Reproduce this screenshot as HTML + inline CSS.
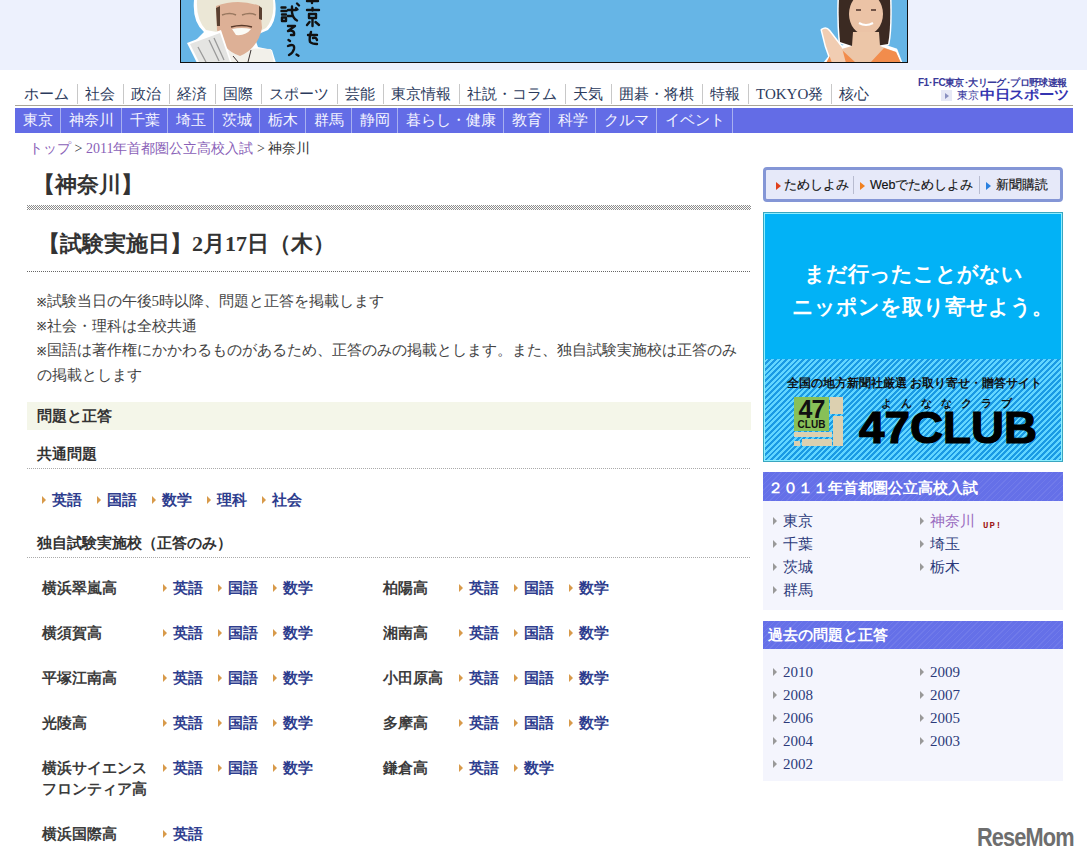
<!DOCTYPE html>
<html><head><meta charset="utf-8">
<style>
*{margin:0;padding:0;box-sizing:border-box}
html,body{width:1087px;height:861px;overflow:hidden;background:#fff}
body{position:relative;font-family:"Liberation Serif",serif;color:#333;font-size:15px;text-spacing-trim:space-all}
.abs{position:absolute}
#topbg{left:0;top:0;width:1087px;height:70px;background:#edf1fd}
#banner{left:180px;top:-28px;width:728px;height:91px;border:1.5px solid #111;background:#66b5e6;overflow:hidden}
/* top nav */
#gnav{left:16.5px;top:84px;height:20px;display:flex;white-space:nowrap}
#gnav span{display:block;height:20px;line-height:20px;padding:0 7.5px;border-left:1px solid #c8c8c8;color:#2b3a5c;font-size:15px}
#gnav span:first-child{border-left:none}
#gline{left:15px;top:105px;width:1058px;height:1px;background:#a8a498}
#lnav{left:15px;top:108px;width:1058px;height:25px;background:#636ce6;display:flex;white-space:nowrap}
#lnav span{display:block;height:25px;line-height:25px;padding:0 7.5px;border-right:1px solid #a8b0f0;color:#f4f4ff;font-size:15px}
#bc{left:29px;top:139px;font-size:14px;line-height:20px;color:#8a5fb8;white-space:nowrap}
#bc .g{color:#333}
h1{position:absolute;left:32.5px;top:173px;font-size:22px;line-height:24px;font-weight:bold;color:#333;white-space:nowrap}
#hatch{left:27px;top:205px;width:724px;height:5px;background:repeating-conic-gradient(#8c8c8c 0 25%,#fff 0 50%) 1px 0/2px 2px}
h2{position:absolute;left:38px;top:231.5px;font-size:22px;line-height:24px;font-weight:bold;color:#333;white-space:nowrap}
#dl1{left:27px;top:271px;width:724px;height:1px;background:repeating-linear-gradient(90deg,#666 0 1px,transparent 1px 2px)}
#notes{left:37px;top:290px;font-size:15px;line-height:23.5px;color:#444;white-space:nowrap}
.km{display:inline-block;width:9.5px;font-size:11px;position:relative;top:-0.5px;left:-0.5px;font-weight:bold}
#sec{left:27px;top:402px;width:724px;height:28px;background:#f4f6e9}
#sec span{position:absolute;left:10px;top:4px;font-size:15px;line-height:20px;font-weight:bold;color:#333}
.sub{position:absolute;left:37px;font-size:15px;line-height:20px;font-weight:bold;color:#333;white-space:nowrap}
.dots{position:absolute;left:27px;width:724px;height:1px;background:repeating-linear-gradient(90deg,#aaa 0 1px,transparent 1px 2px)}
.lk{position:absolute;font-size:15px;line-height:20px;font-weight:bold;color:#2e3d8e;white-space:nowrap}
.ar{position:absolute;width:0;height:0;border-left:4px solid #d89a4a;border-top:4px solid transparent;border-bottom:4px solid transparent}
.sn{position:absolute;font-size:15px;line-height:21px;font-weight:bold;color:#3c3c3c;white-space:nowrap}
/* right column */
#tame{left:763px;top:167px;width:300px;height:35px;border:3px solid #8496d6;border-radius:4px;background:#e6e9f9;font-family:"Liberation Sans",sans-serif;font-size:12.5px;color:#111;font-weight:normal;-webkit-text-stroke:0.15px #111}
#tame .t{position:absolute;top:8px;line-height:15px;white-space:nowrap}
#tame .sp{position:absolute;top:6px;width:1px;height:18px;background:#b8bcd0}
.tri{position:absolute;width:0;height:0;border-left:5.5px solid #e0401c;border-top:4px solid transparent;border-bottom:4px solid transparent}
#ad{left:763px;top:212px;width:300px;height:250px;border:1px solid #3aa6c0;background:#02b2f6;overflow:hidden;font-family:"Liberation Sans",sans-serif}
#ad .in{position:absolute;left:0;top:0;right:0;bottom:0;border:1px solid #8eeeff}
#ad .st{position:absolute;left:1px;top:146px;width:296px;height:101px;background:repeating-linear-gradient(-45deg,#1a9ae4 0 2px,#62d6ff 2px 4px)}
#ad .l1,#ad .l2{position:absolute;left:0;width:298px;text-align:center;color:#fff;font-weight:bold;font-size:21px;line-height:26px;white-space:nowrap}
.box{position:absolute;left:763px;width:300px;background:#f4f5fd}
.bh{position:absolute;left:0;top:0;width:300px;background:#6570e8 repeating-linear-gradient(-45deg,rgba(255,255,255,0) 0 3px,rgba(255,255,255,.07) 3px 4px);color:#fff;font-weight:bold;font-size:15px;white-space:nowrap}
.it{position:absolute;font-size:15px;line-height:20px;color:#2b3a7a;white-space:nowrap}
.ga{position:absolute;width:0;height:0;border-left:4px solid #999;border-top:4px solid transparent;border-bottom:4px solid transparent}
</style></head><body>
<div id="topbg" class="abs"></div>
<div id="banner" class="abs"></div>
<svg class="abs" style="left:0;top:0" width="1087" height="62" viewBox="0 0 1087 62">
<g>
<!-- man -->
<path d="M194 0 L275 0 Q278 20 268 30 L254 36 L258 47 L272 50 L276 63 L200 63 L196 40 L204 32 Q192 22 194 0 Z" fill="#fff"/>
<path d="M197 0 L273 0 Q275 18 266 28 L256 33 L222 33 L206 30 Q196 20 197 0 Z" fill="#ebe7d6"/>
<path d="M229 48 L271 49 L274 63 L226 63 Z" fill="#f2f0ea"/>
<path d="M216 6 Q238 -2 260 6 L262 28 Q258 48 240 56 Q222 50 217 30 Z" fill="#ddb096"/>
<path d="M216 8 L220 6 L220 26 L217 26 Z M259 6 L262 8 L262 20 L259 19 Z" fill="#5a4030"/>
<path d="M222 15 Q230 12 236 15 M242 15 Q250 12 256 15" stroke="#9a7860" stroke-width="1.5" fill="none"/>
<path d="M232 29 Q242 27 251 29 Q246 36 236 35 Z" fill="#fbfbf6"/>
<path d="M231 27 Q242 24 252 27" stroke="#5a3a2a" stroke-width="1.5" fill="none"/>
<path d="M233 56 L238 62 M251 50 L248 62" stroke="#3a3030" stroke-width="1"/>
<path d="M187 43 L221 30 L232 63 L197 63 Z" fill="#fff"/>
<path d="M190 44 L220 33 L230 62 L199 62 Z" fill="#e4e4e2"/>
<path d="M214 38 L224 60 M209 40 L219 61 M198 47 L206 62" stroke="#9a9a9a" stroke-width="1.3"/>
<!-- calligraphy -->
<g stroke="#111" stroke-width="2.4" fill="none" stroke-linecap="round" stroke-linejoin="round">
<path d="M297 3.5 l2 2"/>
<path d="M281.5 7.5 h4 M281.5 11 h5 M282 14.5 h4 M282 17.5 h4 v3.5 h-4 z M288 10 h8 M292 6.5 v6 q1 6 5 8 M296 8 l1.5 1.5 M288 16 h4"/>
<path d="M288 26 h7 l-7 5 q7 -1.5 6 4 h-3"/>
<path d="M288.5 40 l1.5 1 M288 46 q7 -3 6 3 q-1 4 -5 6"/>
<path d="M296.5 54.5 l2 1.2"/>
<path d="M307 1 h11 M312 0 v3"/>
<path d="M307 10 h12 M312.5 8 v2.5 M309 14 h7 v4 h-7 z M312.5 18 v8 M309.5 22 l-2.5 3 M315.5 22 l3.5 3"/>
<path d="M308 35 h9 M311 32 q-2 6 -1 10 q2 2 7 2 M313 38 q3 -1 4 2"/>
</g>
<!-- woman -->
<g stroke="#fff" stroke-width="3" stroke-linejoin="round">
<path d="M839 -2 L890 -2 Q891 30 888 44 L876 46 L852 46 L840 42 Q838 20 839 -2 Z" fill="#fff"/>
<path d="M836 49 L852 44 L878 44 L896 50 L901 63 L825 63 Z" fill="#fff"/>
<path d="M822 30 Q826 27 829 31 L842 48 L846 63 L832 63 L826 46 Z" fill="#fff"/>
</g>
<path d="M839 -2 L890 -2 Q891 30 888 44 L876 46 L852 46 L840 42 Q838 20 839 -2 Z" fill="#3b2a22"/>
<ellipse cx="866" cy="14" rx="17" ry="21" fill="#ebc3a6"/>
<path d="M859 23 Q866 27 873 23" stroke="#fff" stroke-width="2.2" fill="none"/>
<path d="M856 10 h5 M871 10 h5" stroke="#4a3028" stroke-width="1.4"/>
<path d="M853 32 L879 32 L880 46 L896 52 L901 63 L826 63 L838 50 L852 46 Z" fill="#ecc6a8"/>
<path d="M826 63 L832 52 L842 50 L856 63 Z M870 63 L884 48 L896 52 L901 63 Z" fill="#f28c4c"/>
<path d="M822 30 Q826 27 829 31 L842 48 L846 63 L832 63 L826 46 Z" fill="#f1cdb2"/>
</g>
</svg>

<div id="gnav" class="abs"><span>ホーム</span><span>社会</span><span>政治</span><span>経済</span><span>国際</span><span>スポーツ</span><span>芸能</span><span>東京情報</span><span>社説・コラム</span><span>天気</span><span>囲碁・将棋</span><span>特報</span><span>TOKYO発</span><span>核心</span></div>
<div class="abs" style="left:918px;top:76.5px;font-family:'Liberation Sans',sans-serif;font-size:10px;line-height:12px;letter-spacing:-0.6px;font-weight:bold;color:#3a3a9a;white-space:nowrap">F1･FC東京･大リーグ･プロ野球速報</div>
<div class="abs" style="left:941px;top:90px;width:11px;height:11px;background:#e6e8f6"></div>
<div class="abs" style="left:945px;top:93px;width:0;height:0;border-left:4px solid #8a90c0;border-top:3px solid transparent;border-bottom:3px solid transparent"></div>
<div class="abs" style="left:957px;top:88.5px;font-family:'Liberation Sans',sans-serif;font-size:11px;line-height:13px;color:#3a3aa0;white-space:nowrap">東京</div>
<div class="abs" style="left:980px;top:88px;font-family:'Liberation Sans',sans-serif;font-size:12.5px;line-height:14px;font-weight:bold;letter-spacing:-0.5px;color:#3434b0;white-space:nowrap;transform:scaleX(1.18);transform-origin:left top">中日スポーツ</div>
<div id="gline" class="abs"></div>
<div id="lnav" class="abs"><span>東京</span><span>神奈川</span><span>千葉</span><span>埼玉</span><span>茨城</span><span>栃木</span><span>群馬</span><span>静岡</span><span>暮らし・健康</span><span>教育</span><span>科学</span><span>クルマ</span><span>イベント</span></div>

<div id="bc" class="abs">トップ <span class="g">&gt;</span> 2011年首都圏公立高校入試 <span class="g">&gt;</span> <span class="g">神奈川</span></div>
<h1>【神奈川】</h1>
<div id="hatch" class="abs"></div>
<h2>【試験実施日】2月17日（木）</h2>
<div id="dl1" class="abs"></div>
<div id="notes" class="abs"><span class="km">※</span>試験当日の午後5時以降、問題と正答を掲載します<br><span class="km">※</span>社会・理科は全校共通<br><span class="km">※</span>国語は著作権にかかわるものがあるため、正答のみの掲載とします。また、独自試験実施校は正答のみ<br>の掲載とします</div>
<div id="sec" class="abs"><span>問題と正答</span></div>
<div class="sub" style="top:444px">共通問題</div>
<div class="dots" style="top:468px"></div>
<i class="ar" style="left:42px;top:496px"></i><a class="lk" style="left:52px;top:490px">英語</a>
<i class="ar" style="left:97px;top:496px"></i><a class="lk" style="left:107px;top:490px">国語</a>
<i class="ar" style="left:152px;top:496px"></i><a class="lk" style="left:162px;top:490px">数学</a>
<i class="ar" style="left:207px;top:496px"></i><a class="lk" style="left:217px;top:490px">理科</a>
<i class="ar" style="left:262px;top:496px"></i><a class="lk" style="left:272px;top:490px">社会</a>
<div class="sub" style="top:533px">独自試験実施校（正答のみ）</div>
<div class="dots" style="top:557px"></div>
<div class="sn" style="left:42px;top:577.5px">横浜翠嵐高</div>
<i class="ar" style="left:163px;top:584px"></i><a class="lk" style="left:173px;top:578px">英語</a>
<i class="ar" style="left:218px;top:584px"></i><a class="lk" style="left:228px;top:578px">国語</a>
<i class="ar" style="left:273px;top:584px"></i><a class="lk" style="left:283px;top:578px">数学</a>
<div class="sn" style="left:42px;top:622.5px">横須賀高</div>
<i class="ar" style="left:163px;top:629px"></i><a class="lk" style="left:173px;top:623px">英語</a>
<i class="ar" style="left:218px;top:629px"></i><a class="lk" style="left:228px;top:623px">国語</a>
<i class="ar" style="left:273px;top:629px"></i><a class="lk" style="left:283px;top:623px">数学</a>
<div class="sn" style="left:42px;top:667.5px">平塚江南高</div>
<i class="ar" style="left:163px;top:674px"></i><a class="lk" style="left:173px;top:668px">英語</a>
<i class="ar" style="left:218px;top:674px"></i><a class="lk" style="left:228px;top:668px">国語</a>
<i class="ar" style="left:273px;top:674px"></i><a class="lk" style="left:283px;top:668px">数学</a>
<div class="sn" style="left:42px;top:712.5px">光陵高</div>
<i class="ar" style="left:163px;top:719px"></i><a class="lk" style="left:173px;top:713px">英語</a>
<i class="ar" style="left:218px;top:719px"></i><a class="lk" style="left:228px;top:713px">国語</a>
<i class="ar" style="left:273px;top:719px"></i><a class="lk" style="left:283px;top:713px">数学</a>
<div class="sn" style="left:42px;top:757.5px">横浜サイエンス<br>フロンティア高</div>
<i class="ar" style="left:163px;top:764px"></i><a class="lk" style="left:173px;top:758px">英語</a>
<i class="ar" style="left:218px;top:764px"></i><a class="lk" style="left:228px;top:758px">国語</a>
<i class="ar" style="left:273px;top:764px"></i><a class="lk" style="left:283px;top:758px">数学</a>
<div class="sn" style="left:42px;top:823.5px">横浜国際高</div>
<i class="ar" style="left:163px;top:830px"></i><a class="lk" style="left:173px;top:824px">英語</a>
<div class="sn" style="left:383px;top:577.5px">柏陽高</div>
<i class="ar" style="left:459px;top:584px"></i><a class="lk" style="left:469px;top:578px">英語</a>
<i class="ar" style="left:514px;top:584px"></i><a class="lk" style="left:524px;top:578px">国語</a>
<i class="ar" style="left:569px;top:584px"></i><a class="lk" style="left:579px;top:578px">数学</a>
<div class="sn" style="left:383px;top:622.5px">湘南高</div>
<i class="ar" style="left:459px;top:629px"></i><a class="lk" style="left:469px;top:623px">英語</a>
<i class="ar" style="left:514px;top:629px"></i><a class="lk" style="left:524px;top:623px">国語</a>
<i class="ar" style="left:569px;top:629px"></i><a class="lk" style="left:579px;top:623px">数学</a>
<div class="sn" style="left:383px;top:667.5px">小田原高</div>
<i class="ar" style="left:459px;top:674px"></i><a class="lk" style="left:469px;top:668px">英語</a>
<i class="ar" style="left:514px;top:674px"></i><a class="lk" style="left:524px;top:668px">国語</a>
<i class="ar" style="left:569px;top:674px"></i><a class="lk" style="left:579px;top:668px">数学</a>
<div class="sn" style="left:383px;top:712.5px">多摩高</div>
<i class="ar" style="left:459px;top:719px"></i><a class="lk" style="left:469px;top:713px">英語</a>
<i class="ar" style="left:514px;top:719px"></i><a class="lk" style="left:524px;top:713px">国語</a>
<i class="ar" style="left:569px;top:719px"></i><a class="lk" style="left:579px;top:713px">数学</a>
<div class="sn" style="left:383px;top:757.5px">鎌倉高</div>
<i class="ar" style="left:459px;top:764px"></i><a class="lk" style="left:469px;top:758px">英語</a>
<i class="ar" style="left:514px;top:764px"></i><a class="lk" style="left:524px;top:758px">数学</a>

<div id="tame" class="abs">
<i class="tri" style="left:10px;top:11.5px"></i><span class="t" style="left:18px">ためしよみ</span>
<i class="sp" style="left:87px"></i>
<i class="tri" style="left:94px;top:11.5px;border-left-color:#f08020"></i><span class="t" style="left:104px">Webでためしよみ</span>
<i class="sp" style="left:213px"></i>
<i class="tri" style="left:220px;top:11.5px;border-left-color:#2a80e0"></i><span class="t" style="left:230px">新聞購読</span>
</div>
<div id="ad" class="abs"><div class="in"></div>
<div class="l1" style="top:48px">まだ行ったことがない</div>
<div class="l2" style="top:81px;padding-left:18px">ニッポンを取り寄せよう。</div>
<div class="st"></div>
<div style="position:absolute;left:23px;top:163px;font-size:11.5px;line-height:14px;font-weight:bold;color:#111;white-space:nowrap">全国の地方新聞社厳選 お取り寄せ・贈答サイト</div>
<div style="position:absolute;left:66px;top:184px;width:13px;height:17px;background:#dcd0b0"></div>
<div style="position:absolute;left:69px;top:203px;width:10px;height:30px;background:#dcd0b0"></div>
<div style="position:absolute;left:30px;top:219px;width:38px;height:5px;background:#dcd0b0"></div>
<div style="position:absolute;left:38px;top:226px;width:30px;height:7px;background:#dcd0b0"></div>
<div style="position:absolute;left:30px;top:228px;width:6px;height:5px;background:#dcd0b0"></div>
<div style="position:absolute;left:30px;top:184px;width:35px;height:34px;background:#88c058"></div>
<div style="position:absolute;left:29px;top:183px;width:37px;text-align:center;font-size:25px;line-height:26px;font-weight:bold;color:#111;letter-spacing:-1px">47</div>
<div style="position:absolute;left:29px;top:206px;width:37px;text-align:center;font-size:10px;line-height:12px;font-weight:bold;color:#111">CLUB</div>
<div style="position:absolute;left:117px;top:183px;font-size:11px;line-height:14px;font-weight:bold;color:#111;letter-spacing:9px;white-space:nowrap">よんななクラブ</div>
<div style="position:absolute;left:95px;top:189px;font-size:44px;line-height:52px;font-weight:bold;color:#000;-webkit-text-stroke:1.2px #000;white-space:nowrap;transform:scaleX(1.04);transform-origin:left top">47CLUB</div>
</div>
<div class="box" style="top:472px;height:138px">
<div class="bh" style="height:29px;line-height:29px;padding-left:5px;padding-top:2px;letter-spacing:0">２０１１年首都圏公立高校入試</div>
<i class="ga" style="left:10px;top:44.5px"></i><span class="it" style="left:20px;top:38.5px">東京</span>
<i class="ga" style="left:10px;top:67.5px"></i><span class="it" style="left:20px;top:61.5px">千葉</span>
<i class="ga" style="left:10px;top:90.5px"></i><span class="it" style="left:20px;top:84.5px">茨城</span>
<i class="ga" style="left:10px;top:113.5px"></i><span class="it" style="left:20px;top:107.5px">群馬</span>
<i class="ga" style="left:157px;top:44.5px"></i><span class="it" style="left:167px;top:38.5px;color:#9a6cc0">神奈川</span><span style="position:absolute;left:220px;top:49px;font-family:'Liberation Mono',monospace;font-size:9px;line-height:10px;letter-spacing:1px;font-weight:bold;color:#a01818">UP!</span>
<i class="ga" style="left:157px;top:67.5px"></i><span class="it" style="left:167px;top:61.5px">埼玉</span>
<i class="ga" style="left:157px;top:90.5px"></i><span class="it" style="left:167px;top:84.5px">栃木</span>
</div>
<div class="box" style="top:621px;height:160px">
<div class="bh" style="height:28px;line-height:28px;padding-left:5px">過去の問題と正答</div>
<i class="ga" style="left:10px;top:47px"></i><span class="it" style="left:20px;top:41px">2010</span>
<i class="ga" style="left:10px;top:70px"></i><span class="it" style="left:20px;top:64px">2008</span>
<i class="ga" style="left:10px;top:93px"></i><span class="it" style="left:20px;top:87px">2006</span>
<i class="ga" style="left:10px;top:116px"></i><span class="it" style="left:20px;top:110px">2004</span>
<i class="ga" style="left:10px;top:139px"></i><span class="it" style="left:20px;top:133px">2002</span>
<i class="ga" style="left:157px;top:47px"></i><span class="it" style="left:167px;top:41px">2009</span>
<i class="ga" style="left:157px;top:70px"></i><span class="it" style="left:167px;top:64px">2007</span>
<i class="ga" style="left:157px;top:93px"></i><span class="it" style="left:167px;top:87px">2005</span>
<i class="ga" style="left:157px;top:116px"></i><span class="it" style="left:167px;top:110px">2003</span>
</div>
<div class="abs" style="left:977px;top:822px;font-family:'Liberation Sans',sans-serif;font-size:25px;line-height:30px;font-weight:bold;color:#6e6e6e;letter-spacing:-1px;transform:scaleX(0.87);transform-origin:left top;white-space:nowrap">ReseMom</div>
</body></html>
